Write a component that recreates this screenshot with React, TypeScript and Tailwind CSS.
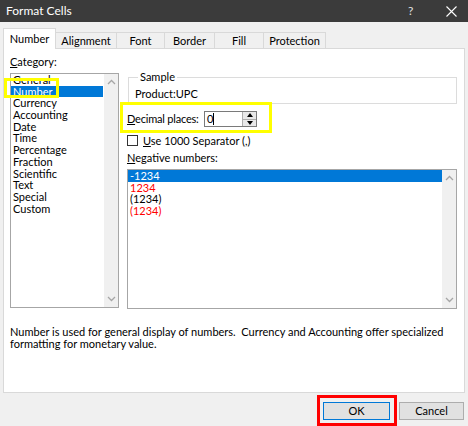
import React from 'react';

const categories = [
  'General',
  'Number',
  'Currency',
  'Accounting',
  'Date',
  'Time',
  'Percentage',
  'Fraction',
  'Scientific',
  'Text',
  'Special',
  'Custom',
];

const negatives = [
  { label: '-1234', red: false },
  { label: '1234', red: true },
  { label: '(1234)', red: false },
  { label: '(1234)', red: true },
];

const tabs = [
  { label: 'Number', w: 'w-[53px]' },
  { label: 'Alignment', w: 'w-[61px]' },
  { label: 'Font', w: 'w-[48px]' },
  { label: 'Border', w: 'w-[50px]' },
  { label: 'Fill', w: 'w-[49px]' },
  { label: 'Protection', w: 'w-[62px]' },
];

const Chevron: React.FC<{ up?: boolean }> = ({ up }) => (
  <svg width="9" height="6" viewBox="0 0 9 6" className="block">
    <polyline
      points={up ? '1,5 4.5,1.5 8,5' : '1,1 4.5,4.5 8,1'}
      fill="none"
      stroke="#a6a6a6"
      strokeWidth="1.3"
    />
  </svg>
);

const ScrollBar: React.FC = () => (
  <div className="w-[14px] shrink-0 bg-[#f0f0f0] flex flex-col items-center justify-between py-[5px]">
    <Chevron up />
    <Chevron />
  </div>
);

export default function App() {
  return (
    <div className="w-[468px] h-[426px] bg-[#f0f0f0] flex flex-col font-['Lato',sans-serif] text-[11px] leading-[12px] text-black overflow-hidden whitespace-nowrap">
      {/* title bar */}
      <div className="h-[22px] bg-[#3b3b3b] text-white flex items-center pl-[6px] shrink-0">
        <span className="text-[12px] flex-1">Format Cells</span>
        <span className="text-[12px] w-[14px] mr-[24px] text-[#e0e0e0]">?</span>
        <svg width="11" height="11" viewBox="0 0 11 11" className="mr-[11px]">
          <path d="M0.5 0.5 L10.5 10.5 M10.5 0.5 L0.5 10.5" stroke="#ffffff" strokeWidth="1.1" />
        </svg>
      </div>

      {/* tabs */}
      <div className="flex items-end pl-[3px] mt-[6px] h-[21px] relative z-10">
        {tabs.map((t, i) =>
          i === 0 ? (
            <div
              key={t.label}
              className={`${t.w} h-[21px] bg-white border border-b-0 border-[#d9d9d9] flex items-center justify-center pb-px`}
            >
              {t.label}
            </div>
          ) : (
            <div
              key={t.label}
              className={`${t.w} h-[16px] mb-px bg-[#f0f0f0] border-t border-r border-[#d9d9d9] flex items-center justify-center pt-px`}
            >
              {t.label}
            </div>
          )
        )}
      </div>

      {/* panel */}
      <div className="mx-[3px] -mt-px h-[345px] bg-white border border-[#d9d9d9] flex flex-col shrink-0">
        <div className="flex pl-[6px] pt-[7px]">
          {/* left column */}
          <div className="w-[109px] flex flex-col relative">
            <div className="h-[12px]">
              <u>C</u>ategory:
            </div>
            <div className="mt-[5px] h-[235px] border border-[#a6a6a6] flex">
              <div className="flex-1 flex flex-col pr-px">
                {categories.map((c) => (
                  <div
                    key={c}
                    className={`h-[11.7px] leading-[11.7px] pl-[2px] ${c === 'Number' ? 'bg-[#0078d7] text-white' : ''}`}
                  >
                    {c}
                  </div>
                ))}
              </div>
              <ScrollBar />
            </div>
            {/* highlight over "Number" */}
            <div className="absolute left-[-6px] top-[22px] w-[55px] h-[20px] border-[3px] border-[#ffff00]" />
          </div>

          {/* right column */}
          <div className="ml-[8px] w-[330px] flex flex-col">
            <fieldset className="ml-px mt-[15px] border border-[#dcdcdc] pl-[6px] pt-[5px] pb-[3px]">
              <legend className="ml-[3px] px-[2px] h-[12px]">Sample</legend>
              <div className="h-[12px]">Product:UPC</div>
            </fieldset>

            <div className="relative -mt-[2px] -ml-[7px] w-[152px] h-[31px] border-[3px] border-[#ffff00] flex items-center pl-[4px] pt-[3px]">
              <span className="tracking-[-0.2px]">
                <u>D</u>ecimal places:
              </span>
              <div className="ml-auto mr-[12px] flex h-[16px] border border-[#7a7a7a]">
                <div className="w-[37px] bg-white flex items-center pl-[2px]">
                  0<span className="inline-block w-px h-[12px] bg-black" />
                </div>
                <div className="w-[14px] border-l border-[#adadad] flex flex-col">
                  <div className="flex-1 bg-[#e8e8e8] border-b border-[#adadad] flex items-center justify-center">
                    <svg width="6" height="4" viewBox="0 0 6 4">
                      <polygon points="0,4 3,0 6,4" fill="#000" />
                    </svg>
                  </div>
                  <div className="flex-1 bg-[#e8e8e8] flex items-center justify-center">
                    <svg width="6" height="4" viewBox="0 0 6 4">
                      <polygon points="0,0 3,4 6,0" fill="#000" />
                    </svg>
                  </div>
                </div>
              </div>
            </div>

            <div className="mt-[2px] flex items-center h-[11px]">
              <div className="w-[11px] h-[11px] border border-[#333333] bg-white" />
              <span className="ml-[5px]">
                <u>U</u>se 1000 Separator (,)
              </span>
            </div>

            <div className="mt-[6px] h-[12px]">
              <u>N</u>egative numbers:
            </div>

            <div className="mt-[5px] h-[140px] border border-[#a6a6a6] flex">
              <div className="flex-1 flex flex-col">
                {negatives.map((n, i) => (
                  <div
                    key={i}
                    className={`h-[11.7px] leading-[11.7px] pl-[2px] ${
                      i === 0 ? 'bg-[#0078d7] text-white' : n.red ? 'text-[#ff0000]' : ''
                    }`}
                  >
                    {n.label}
                  </div>
                ))}
              </div>
              <ScrollBar />
            </div>
          </div>
        </div>

        <p className="mt-[17px] pl-[6px] leading-[11.7px]">
          Number is used for general display of numbers.&nbsp; Currency and Accounting offer specialized
          <br />
          formatting for monetary value.
        </p>
      </div>

      {/* buttons */}
      <div className="flex justify-end items-start pr-[4px] mt-[2px]">
        <div className="border-[3px] border-[#ff0000] pl-[3px] pr-[4px] pt-[4px] pb-[3px]">
          <button className="w-[67px] h-[18px] bg-[#e1e1e1] border border-[#0078d7] flex items-center justify-center">
            OK
          </button>
        </div>
        <button className="ml-[2px] mt-[7px] w-[65px] h-[18px] bg-[#e1e1e1] border border-[#adadad] flex items-center justify-center">
          Cancel
        </button>
      </div>
    </div>
  );
}
